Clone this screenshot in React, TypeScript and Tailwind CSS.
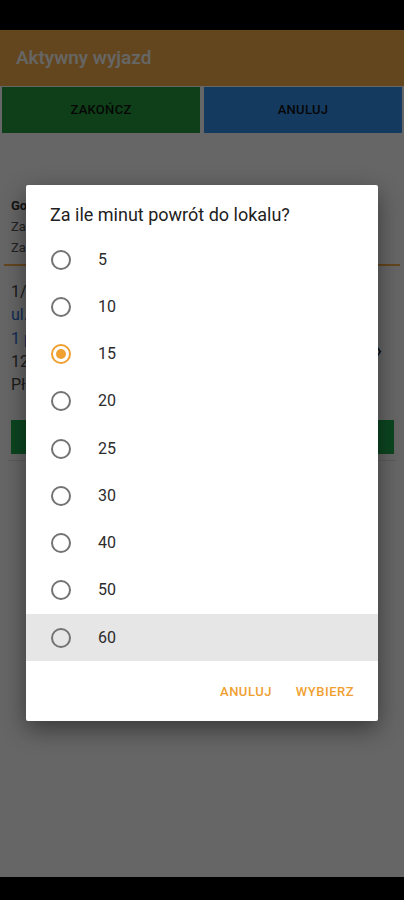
import { useState } from "react"

const options = [5, 10, 15, 20, 25, 30, 40, 50, 60]

function Radio({ checked }: { checked: boolean }) {
    return (
        <span
            className={`flex h-[20px] w-[20px] shrink-0 items-center justify-center rounded-full border-2 ${checked ? "border-[#f0a030]" : "border-[#737373]"}`}
        >
            {checked && <span className="h-[10px] w-[10px] rounded-full bg-[#f0a030]" />}
        </span>
    )
}

export default function App() {
    const [selected, setSelected] = useState(15)
    const pressed = 60

    return (
        <div className="relative h-[900px] w-[404px] overflow-hidden bg-white font-['Roboto',sans-serif]">
            <div className="h-[30px] bg-black" />
            <div className="flex h-[56px] items-center bg-[#f8b04c] px-4 text-[19px] font-medium text-white">
                Aktywny wyjazd
            </div>
            <div className="flex gap-[4px] px-[2px] pt-[1px]">
                <button className="h-[46px] flex-1 bg-[#259e3e] text-[13px] font-medium tracking-[0.3px] text-[#111]">ZAKOŃCZ</button>
                <button className="h-[46px] flex-1 bg-[#3592ee] text-[13px] font-medium tracking-[0.3px] text-[#111]">ANULUJ</button>
            </div>

            <div className="px-[11px] pt-[62px] text-[13px] leading-[21px] text-[#555]">
                <div className="font-bold text-[#333]">Godzina wyjazdu: 12:05</div>
                <div>Zamówień w trasie: 1</div>
                <div>Zakończono: 0</div>
            </div>
            <div className="mx-[4px] mt-[6px] h-[2px] bg-[#f8b04c]" />

            <div className="mx-[8px] mt-[14px] border-b border-[#e5e5e5] pb-[6px]">
                <div className="flex items-start">
                    <div className="flex-1 px-[3px] text-[16px] leading-[23.3px]">
                        <div className="text-[#444]">1/1 Zamówienie #482</div>
                        <div className="text-[#2f6fd6]">ul. Kwiatowa 12</div>
                        <div className="text-[#2f6fd6]">1 piętro</div>
                        <div className="text-[#444]">12:20 - 12:35</div>
                        <div className="text-[#444]">Płatność: gotówka</div>
                    </div>
                    <span className="pr-[14px] pt-[59px] text-[22px] leading-[24px] text-[#222]">›</span>
                </div>
                <button className="mx-[3px] mt-[24px] h-[34px] w-[383px] bg-[#1fb050] text-[13px] font-medium text-white">
                    DOSTARCZONE
                </button>
            </div>

            <div className="absolute bottom-0 left-0 right-0 h-[23px] bg-black" />

            <div className="absolute inset-0 bg-black/60" />

            <div className="absolute left-[26px] top-[185px] w-[352px] rounded-[2px] bg-white shadow-[0_8px_24px_rgba(0,0,0,0.45)]">
                <div className="px-[24px] pt-[18px] text-[18px] leading-[24px] text-[#212121]">
                    Za ile minut powrót do lokalu?
                </div>
                <div className="pt-[9px]">
                    {options.map((m) => (
                        <div
                            key={m}
                            onClick={() => setSelected(m)}
                            className={`flex h-[47.25px] items-center pl-[25px] ${m === pressed ? "bg-[#e6e6e6]" : ""}`}
                        >
                            <Radio checked={m === selected} />
                            <span className="pl-[27px] text-[16px] text-[#2b2b2b]">{m}</span>
                        </div>
                    ))}
                </div>
                <div className="flex h-[60px] items-center justify-end gap-[24px] pr-[24px]">
                    <button className="text-[13px] font-medium tracking-[0.5px] text-[#f0a030]">ANULUJ</button>
                    <button className="text-[13px] font-medium tracking-[0.5px] text-[#f0a030]">WYBIERZ</button>
                </div>
            </div>
        </div>
    )
}
